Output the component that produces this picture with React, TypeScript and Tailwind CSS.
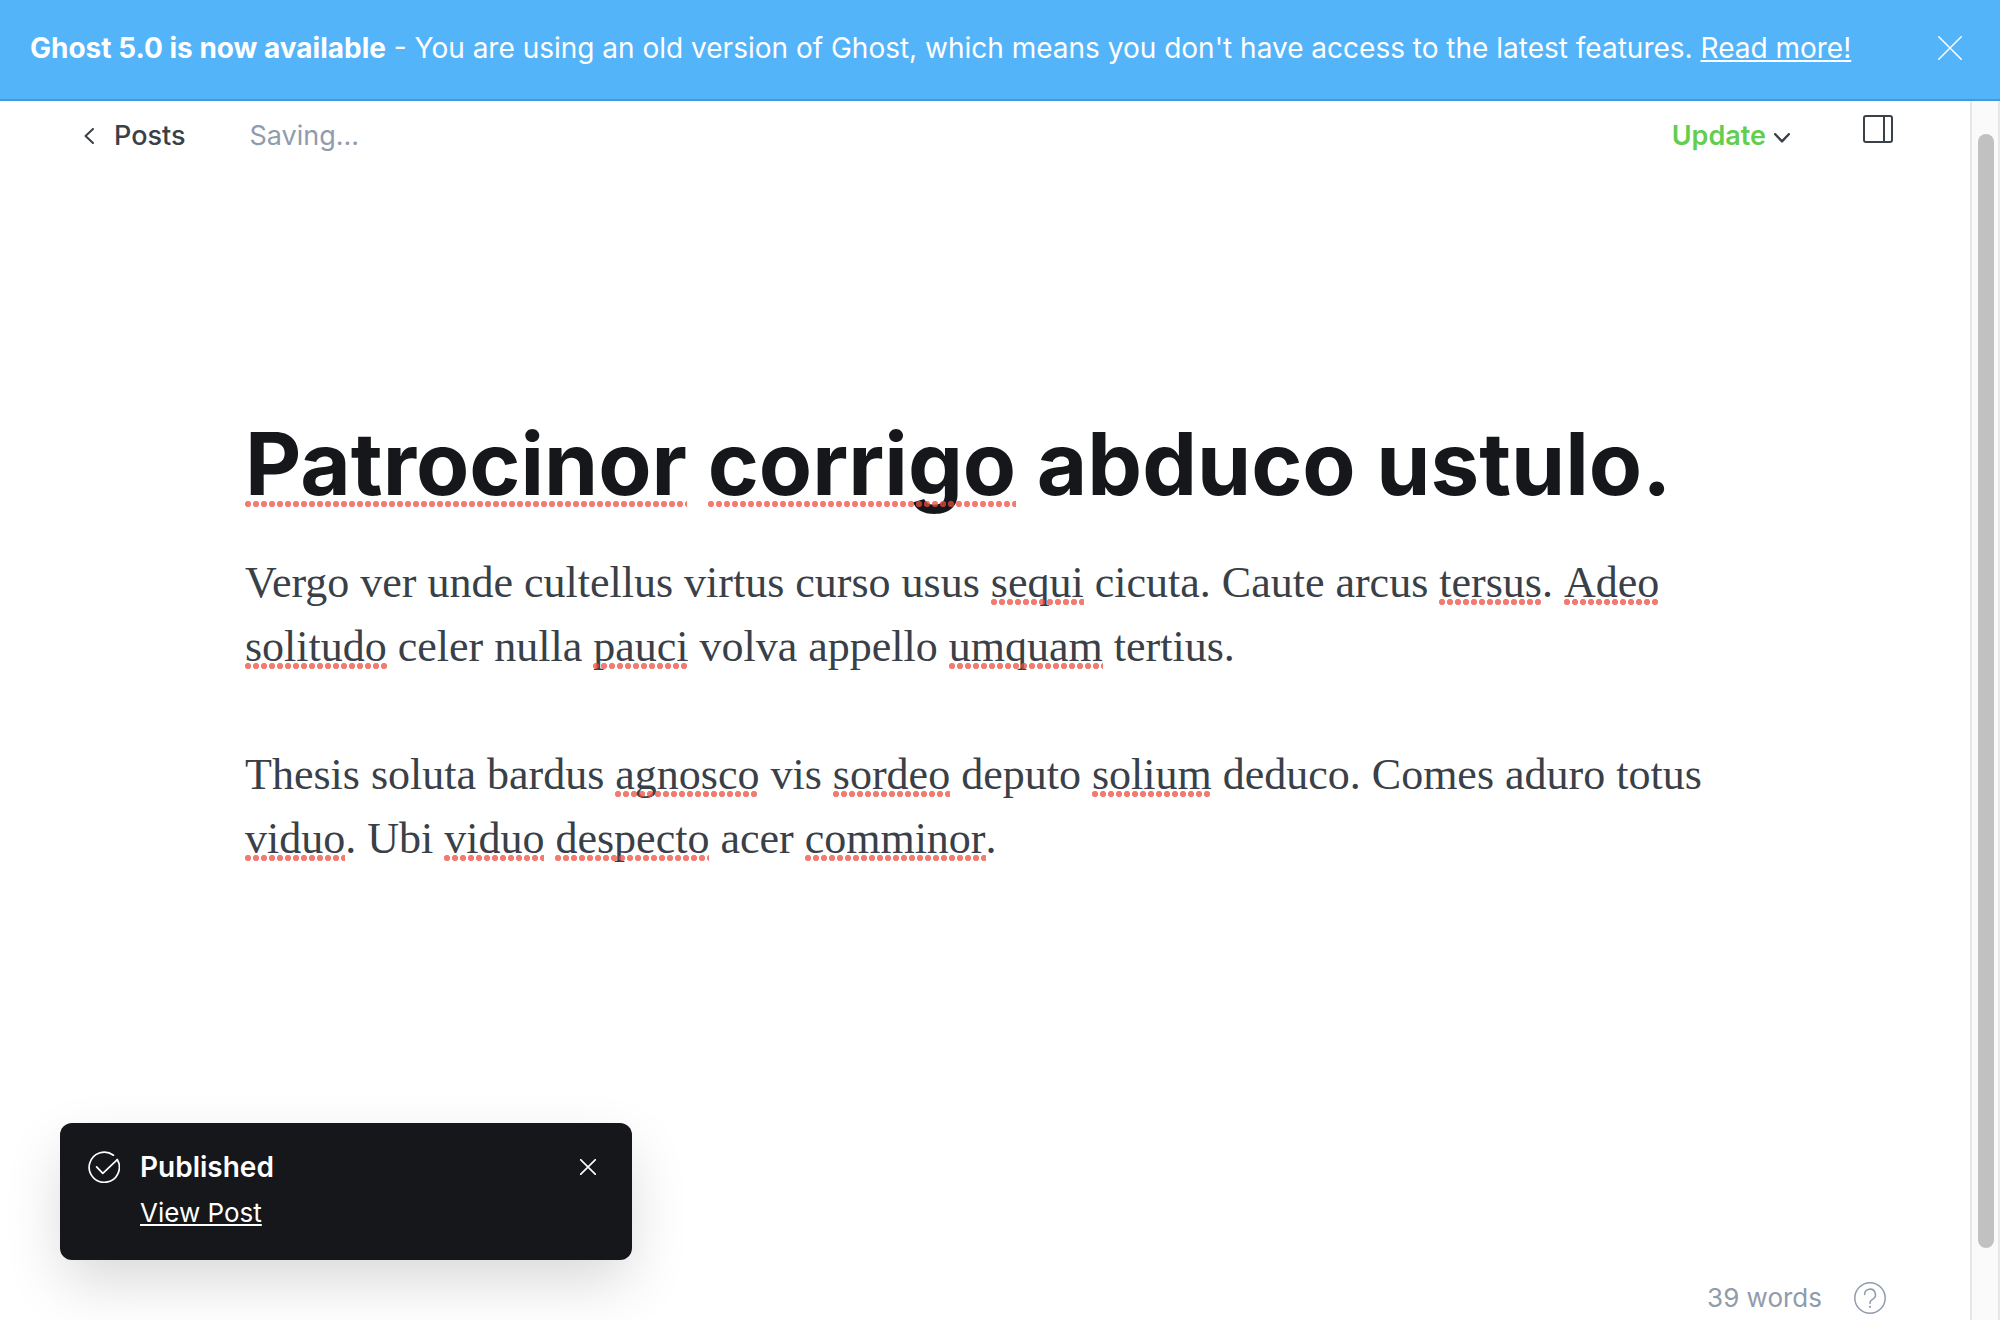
import type { ReactNode } from "react";

function CloseIcon({ className, width }: { className: string; width: number }) {
  return (
    <svg viewBox="0 0 24 24" className={className} fill="none" stroke="currentColor" strokeWidth={width} strokeLinecap="round" aria-hidden="true">
      <path d="M0.75 0.75 23.25 23.25M23.25 0.75 0.75 23.25" />
    </svg>
  );
}

/* A word flagged by the spell checker: dotted red line laid over its descenders. */
function Flagged({ children, title = false }: { children: ReactNode; title?: boolean }) {
  return (
    <span
      className={
        "relative inline-block after:pointer-events-none after:absolute after:left-0 after:right-0 after:h-[6px] after:bg-[radial-gradient(circle_at_3px_3px,#ee4b3cbb_2.8px,transparent_3.4px)] after:bg-[length:8px_6px] after:content-[''] " +
        (title ? "after:bottom-[12px]" : "after:bottom-[10px]")
      }
    >
      {children}
    </span>
  );
}

function Banner() {
  return (
    <aside className="flex h-[101px] shrink-0 items-center justify-between border-b-2 border-[#3f9ae0] bg-[#54b4fa] pr-[38px] pb-1 pl-[30px] text-white">
      <p className="text-[28px] leading-[40px] whitespace-nowrap">
        <strong className="font-bold">Ghost 5.0 is now available</strong> - You are using an old version of Ghost, which means you don't have access to the latest features.{" "}
        <a href="#changelog" className="underline decoration-2 underline-offset-2">Read more!</a>
      </p>
      <button type="button" aria-label="Dismiss">
        <CloseIcon className="size-6" width={1.5} />
      </button>
    </aside>
  );
}

function EditorHeader() {
  return (
    <header className="flex h-[70px] shrink-0 items-center justify-between pr-[77px] pl-[84px] text-[27px] leading-[36px]">
      <div className="flex items-center">
        <a href="#posts" className="flex items-center gap-5 font-medium text-[#394047]">
          <svg viewBox="0 0 10 16" className="h-4 w-[10px]" fill="none" stroke="currentColor" strokeWidth="2" strokeLinecap="round" strokeLinejoin="round" aria-hidden="true">
            <path d="M9 1 1.5 8 9 15" />
          </svg>
          Posts
        </a>
        <span className="ml-16 text-[#8f9cac]">Saving...</span>
      </div>
      <div className="flex items-center">
        <button type="button" className="flex items-center gap-2 font-semibold text-[#62ce50]">
          Update
          <svg viewBox="0 0 16 10" className="mt-1 h-[10px] w-4" fill="none" stroke="#394047" strokeWidth="2.4" strokeLinecap="round" strokeLinejoin="round" aria-hidden="true">
            <path d="M1.2 1.2 8 8.4 14.8 1.2" />
          </svg>
        </button>
        <button type="button" aria-label="Settings" className="mb-[14px] ml-[73px]">
          <svg viewBox="0 0 30 28" className="h-7 w-[30px]" fill="none" stroke="#394047" strokeWidth="2" aria-hidden="true">
            <rect x="1" y="1" width="28" height="26" rx="2" />
            <path d="M21 1v26" />
          </svg>
        </button>
      </div>
    </header>
  );
}

function Toast() {
  return (
    <div role="status" className="absolute bottom-[60px] left-[60px] flex w-[572px] items-start rounded-xl bg-[#15171a] pt-6 pr-9 pb-[25px] pl-7 text-white shadow-[0_24px_60px_-4px_rgba(0,0,0,0.16)]">
      <svg viewBox="0 0 32 32" className="mt-1 size-8 shrink-0" fill="none" stroke="currentColor" strokeWidth="1.7" strokeLinecap="round" strokeLinejoin="round" aria-hidden="true">
        <path d="M8.6 15.8 14.8 22.4 29.3 8.6" />
        <path d="M25.4 4.2A15.1 15.1 0 1 0 29.3 8.6" />
      </svg>
      <div className="ml-5 flex grow flex-col items-start gap-1">
        <span className="text-[28px] leading-[40px] font-semibold">Published</span>
        <a href="#post" className="text-[26px] leading-[44px] underline decoration-2 underline-offset-2">View Post</a>
      </div>
      <button type="button" aria-label="Close" className="mt-3">
        <CloseIcon className="size-4" width={2.4} />
      </button>
    </div>
  );
}

export default function App() {
  return (
    <div className="flex h-screen flex-col overflow-hidden bg-white font-['Inter',sans-serif]">
      <Banner />
      <div className="relative flex min-h-0 grow">
        <div className="flex min-w-0 grow flex-col">
          <EditorHeader />
          <main className="mx-auto w-full max-w-[1480px] grow pt-[238px]">
            <h1 className="text-[87px] leading-[110px] font-bold whitespace-nowrap text-[#15171a]">
              <Flagged title>Patrocinor</Flagged> <Flagged title>corrigo</Flagged> abduco ustulo.
            </h1>
            <div className="mt-8 space-y-16 font-['Liberation_Serif',serif] text-[44px] leading-[64px] text-[#394047]">
              <p>
                Vergo ver unde cultellus virtus curso usus <Flagged>sequi</Flagged> cicuta. Caute arcus <Flagged>tersus</Flagged>. <Flagged>Adeo</Flagged>{" "}
                <Flagged>solitudo</Flagged> celer nulla <Flagged>pauci</Flagged> volva appello <Flagged>umquam</Flagged> tertius.
              </p>
              <p>
                Thesis soluta bardus <Flagged>agnosco</Flagged> vis <Flagged>sordeo</Flagged> deputo <Flagged>solium</Flagged> deduco. Comes aduro totus{" "}
                <Flagged>viduo</Flagged>. Ubi <Flagged>viduo</Flagged> <Flagged>despecto</Flagged> acer <Flagged>comminor</Flagged>.
              </p>
            </div>
          </main>
          <footer className="flex shrink-0 items-center justify-end gap-8 pr-[84px] pb-1 text-[26px] leading-[36px] text-[#8f9cac]">
            <span>39 words</span>
            <button type="button" aria-label="Help">
              <svg viewBox="0 0 32 32" className="block size-8" fill="none" stroke="currentColor" strokeWidth="1.5" strokeLinecap="round" aria-hidden="true">
                <circle cx="16" cy="16" r="15.2" />
                <path d="M10.6 12.6A5.4 5.4 0 1 1 18.6 17.300C16.800 18.300 16 19 16 20.600v1" />
                <circle cx="16" cy="24.800" r="1.100" fill="currentColor" stroke="none" />
              </svg>
            </button>
          </footer>
        </div>
        <div aria-hidden="true" className="flex w-[30px] shrink-0 border-x-2 border-[#e7e7e7] bg-[#fafafa] pt-[33px] pb-[72px] pl-[6px]">
          <div className="w-4 rounded-full bg-[#c1c1c1]" />
        </div>
        <Toast />
      </div>
    </div>
  );
}
